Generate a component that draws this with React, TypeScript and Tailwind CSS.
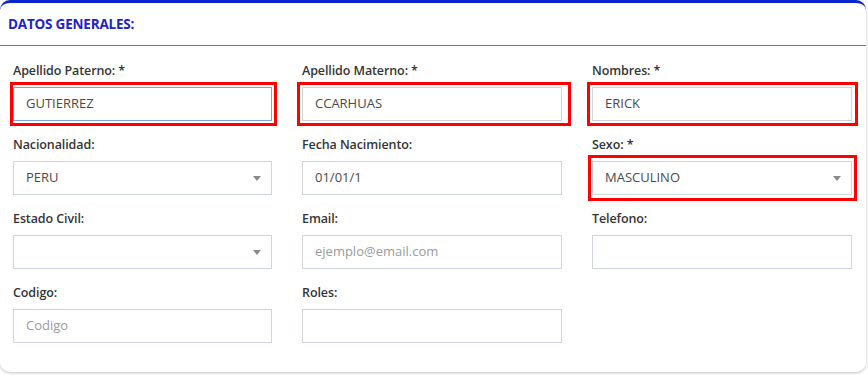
import React from "react";

type Field = {
  label: string;
  value?: string;
  placeholder?: string;
  select?: boolean;
  focused?: boolean;
  red?: string;
};

const fields: Field[] = [
  { label: "Apellido Paterno: *", value: "GUTIERREZ", focused: true, red: "-left-[3px] -right-[5px] -top-[5px] -bottom-[5px]" },
  { label: "Apellido Materno: *", value: "CCARHUAS", red: "-left-[5px] -right-[9px] -top-[5px] -bottom-[5px]" },
  { label: "Nombres: *", value: "ERICK", red: "-left-[5px] -right-[6px] -top-[5px] -bottom-[5px]" },
  { label: "Nacionalidad:", value: "PERU", select: true },
  { label: "Fecha Nacimiento:", value: "01/01/1" },
  { label: "Sexo: *", value: "MASCULINO", select: true, red: "-left-[4px] -right-[5px] -top-[6px] -bottom-[6px]" },
  { label: "Estado Civil:", value: "", select: true },
  { label: "Email:", placeholder: "ejemplo@email.com" },
  { label: "Telefono:", value: "" },
  { label: "Codigo:", placeholder: "Codigo" },
  { label: "Roles:", value: "" },
];

function FieldBox({ f }: { f: Field }) {
  return (
    <div className="flex flex-col">
      <div className="h-[18px] leading-[18px] text-[12.5px] font-semibold text-[#353535] tracking-[-0.1px] mb-[7px] whitespace-nowrap">
        {f.label}
      </div>
      <div className="relative">
        <div
          className={
            "h-[34px] flex items-center pl-[12px] pr-[10px] bg-white border " +
            (f.focused ? "border-[#7fa7d2]" : "border-[#cfd3da]")
          }
        >
          {f.placeholder ? (
            <span className="text-[13px] text-[#9a9a9a]">{f.placeholder}</span>
          ) : (
            <span className="text-[13px] text-[#4a4a4a]">{f.value}</span>
          )}
          {f.select && (
            <svg className="ml-auto" width="8" height="5" viewBox="0 0 8 5">
              <path d="M0 0 L8 0 L4 5 Z" fill="#8a8a8a" />
            </svg>
          )}
        </div>
        {f.red && (
          <div className={"absolute border-[3px] border-[#ff0000] pointer-events-none " + f.red} />
        )}
      </div>
    </div>
  );
}

export default function App() {
  return (
    <div
      className="w-[868px] h-[375px] bg-white"
      style={{ fontFamily: '"Open Sans", "Noto Sans", sans-serif' }}
    >
      <div className="w-[866px] h-[372px] bg-white rounded-[10px] border-t-[3px] border-t-[#0a24d4] shadow-[0_1px_3px_rgba(0,0,0,0.25)]">
        <div className="h-[42px] flex items-center pl-[8px]">
          <span className="text-[13.5px] font-bold text-[#1c24c4] tracking-[-0.2px]">DATOS GENERALES:</span>
        </div>
        <div className="h-px bg-[#3a86cc]" />
        <div className="pt-[16px] pl-[13px] grid grid-cols-[259px_260px_260px] gap-x-[30px] gap-y-[15px]">
          {fields.map((f, i) => (
            <FieldBox key={i} f={f} />
          ))}
        </div>
      </div>
    </div>
  );
}
